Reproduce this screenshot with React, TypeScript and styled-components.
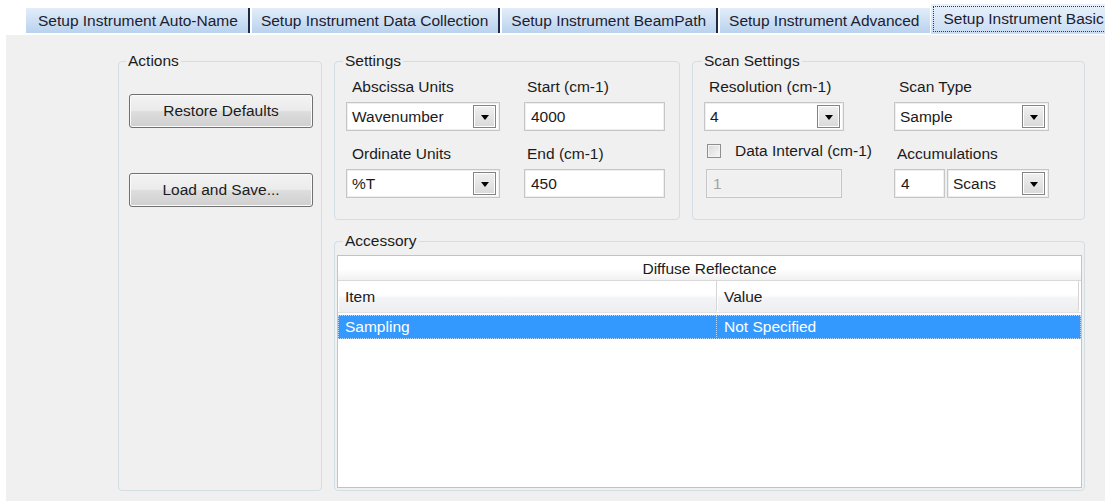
import styled, { createGlobalStyle } from 'styled-components'

const GlobalStyle = createGlobalStyle`
  html, body {
    margin: 0;
    padding: 0;
    background: #ffffff;
  }
  body {
    font-family: "Liberation Sans", Arial, sans-serif;
    font-size: 15.5px;
    color: #1b1b1b;
  }
`

const Page = styled.div`
  display: flex;
  flex-direction: column;
  min-height: 100vh;
  background: #ffffff;
`

const TabStrip = styled.div`
  display: flex;
  align-items: flex-end;
  height: 34px;
  padding-left: 26px;
  border-bottom: 1px solid #ffffff;
  overflow: hidden;
  white-space: nowrap;
`

const Tab = styled.div<{ $active?: boolean; $divider?: boolean; $first?: boolean }>`
  display: flex;
  align-items: center;
  flex-shrink: 0;
  box-sizing: border-box;
  height: ${(p) => (p.$active ? '30px' : '25px')};
  margin-bottom: ${(p) => (p.$active ? '0' : '1px')};
  margin-right: ${(p) => (p.$divider ? '2px' : '1px')};
  padding: ${(p) => (p.$active ? '0 2px' : `0 10px 0 ${p.$first ? 12 : 9}px`)};
  font-size: 15.5px;
  color: #1c2030;
  background: ${(p) =>
    p.$active
      ? 'linear-gradient(#e8f1fb, #c9ddf3)'
      : 'linear-gradient(#e2edf9, #b9d2ee)'};
  border-right: ${(p) => (p.$divider ? '2px solid #1d2a42' : 'none')};
`

const FocusLabel = styled.span`
  display: flex;
  align-items: center;
  height: 24px;
  padding: 0 9px 0 10px;
  border: 1px dotted #3a3a3a;
`

const Panel = styled.div`
  flex: 1;
  margin-left: 6px;
  background: #f0f0f0;
  padding: 17px 0 0 112px;
`

const Layout = styled.div`
  display: grid;
  grid-template-columns: 204px 751px;
  grid-template-rows: 168px 259px;
  column-gap: 12px;
  row-gap: 12px;
`

const Group = styled.fieldset<{ $span?: boolean }>`
  box-sizing: border-box;
  margin: 0;
  min-width: 0;
  border: 1px solid #d3dde4;
  border-radius: 4px;
  grid-row: ${(p) => (p.$span ? '1 / 3' : 'auto')};
`

// the legend sits after the group's left padding, so each group passes its own shift
const Legend = styled.legend<{ $shift: number }>`
  margin-left: ${(p) => p.$shift}px;
  padding: 0 2px;
  line-height: 18px;
`

const ActionsGroup = styled(Group)`
  display: flex;
  flex-direction: column;
  gap: 45px;
  padding: 24px 9px 0 10px;
`

const Button = styled.button`
  width: 184px;
  height: 34px;
  font-family: inherit;
  font-size: 15.5px;
  color: #1b1b1b;
  border: 1px solid #707070;
  border-radius: 3px;
  background: linear-gradient(#f3f3f3 0%, #ebebeb 48%, #dddddd 52%, #cfcfcf 100%);
  box-shadow: inset 0 0 0 1px #fbfbfb;
`

const TopRow = styled.div`
  display: flex;
  gap: 12px;
`

const FormGroup = styled(Group)<{ $width: number; $columns: string; $gap: number }>`
  width: ${(p) => p.$width}px;
  display: grid;
  grid-template-columns: ${(p) => p.$columns};
  column-gap: ${(p) => p.$gap}px;
  row-gap: 14px;
  align-content: start;
  padding: 8px 0 0 11px;
`

const Field = styled.div`
  display: flex;
  flex-direction: column;
  gap: 6px;
`

const Label = styled.div<{ $indent?: number }>`
  height: 18px;
  line-height: 18px;
  padding-left: ${(p) => p.$indent ?? 0}px;
  white-space: nowrap;
`

const Combo = styled.div<{ $width?: number }>`
  box-sizing: border-box;
  display: flex;
  align-items: center;
  width: ${(p) => (p.$width ? `${p.$width}px` : '100%')};
  height: 29px;
  padding: 2px 3px 2px 5px;
  background: #ffffff;
  border: 1px solid #c6c6c6;
  box-shadow: inset 0 0 0 1px #eeeeee;
`

const ComboValue = styled.span`
  flex: 1;
  white-space: nowrap;
`

const DropButton = styled.span`
  box-sizing: border-box;
  display: flex;
  align-items: center;
  justify-content: center;
  width: 23px;
  height: 23px;
  border: 1px solid #838383;
  background: linear-gradient(#f0f0f0, #d9d9d9);
  box-shadow: inset 0 0 0 1px #ffffff;

  &::after {
    content: '';
    border-left: 4px solid transparent;
    border-right: 4px solid transparent;
    border-top: 5px solid #000000;
    margin-top: 1px;
  }
`

const TextBox = styled.div<{ $width?: number; $disabled?: boolean }>`
  box-sizing: border-box;
  display: flex;
  align-items: center;
  width: ${(p) => (p.$width ? `${p.$width}px` : '100%')};
  height: 29px;
  padding-left: 6px;
  background: ${(p) => (p.$disabled ? '#f0f0f0' : '#ffffff')};
  color: ${(p) => (p.$disabled ? '#a3a3a3' : 'inherit')};
  border: 1px solid #c6c6c6;
  box-shadow: inset 0 0 0 1px ${(p) => (p.$disabled ? '#f4f4f4' : '#eeeeee')};
`

const CheckRow = styled.label`
  display: flex;
  align-items: center;
  gap: 14px;
  height: 18px;
  margin-top: -3px;
  margin-bottom: 3px;
  padding-left: 3px;
  white-space: nowrap;
`

const CheckBox = styled.span`
  box-sizing: border-box;
  flex-shrink: 0;
  width: 14px;
  height: 14px;
  border: 1px solid #8e8f8f;
  background: linear-gradient(135deg, #d9d9d9, #f7f7f7);
  box-shadow: inset 0 0 0 1px #f4f4f4;
`

const InsetBox = styled.div`
  padding-left: 2px;
`

const Pair = styled.div`
  display: flex;
  gap: 2px;
`

const AccessoryGroup = styled(Group)`
  grid-column: 2;
  display: flex;
  padding: 5px 2px 2px 2px;
`

const Table = styled.div`
  flex: 1;
  display: flex;
  flex-direction: column;
  background: #ffffff;
  border: 1px solid #b9c5d1;
`

const Caption = styled.div`
  height: 24px;
  line-height: 26px;
  text-align: center;
  background: linear-gradient(#ffffff 55%, #f1f1f1);
  border-bottom: 1px solid #d9d9d9;
`

const Columns = styled.div`
  display: grid;
  grid-template-columns: 379px 362px 1fr;
`

const HeadRow = styled(Columns)`
  height: 31px;
  margin-bottom: 2px;
  border-bottom: 1px solid #e2e2e2;
`

const HeadCell = styled.div`
  display: flex;
  align-items: center;
  padding-left: 7px;
  background: linear-gradient(#ffffff 0%, #ffffff 45%, #f3f4f6 55%, #eceef0 100%);
  border-right: 1px solid #d6d6d6;
  border-radius: 0 0 2px 2px;
  box-shadow: inset 1px 0 0 #ffffff;
`

const DataRow = styled(Columns)<{ $selected?: boolean }>`
  height: 24px;
  background: ${(p) => (p.$selected ? '#3399ff' : 'transparent')};
  color: ${(p) => (p.$selected ? '#ffffff' : 'inherit')};
  outline: 1px dotted ${(p) => (p.$selected ? '#b8dbff' : 'transparent')};
  outline-offset: -1px;
`

const DataCell = styled.div<{ $divider?: boolean }>`
  display: flex;
  align-items: center;
  padding-left: 7px;
  border-right: 1px dotted ${(p) => (p.$divider ? '#b8dbff' : 'transparent')};
`

const tabs = [
  'Setup Instrument Auto-Name',
  'Setup Instrument Data Collection',
  'Setup Instrument BeamPath',
  'Setup Instrument Advanced',
]

export default function App() {
  return (
    <Page>
      <GlobalStyle />
      <TabStrip>
        {tabs.map((t, i) => (
          <Tab key={t} $first={i === 0} $divider={i < tabs.length - 1}>
            {t}
          </Tab>
        ))}
        <Tab $active>
          <FocusLabel>Setup Instrument Basic</FocusLabel>
        </Tab>
      </TabStrip>

      <Panel>
        <Layout>
          <ActionsGroup $span>
            <Legend $shift={-3}>Actions</Legend>
            <Button>Restore Defaults</Button>
            <Button>Load and Save...</Button>
          </ActionsGroup>

          <TopRow>
            <FormGroup $width={346} $columns="154px 141px" $gap={24}>
              <Legend $shift={-3}>Settings</Legend>
              <Field>
                <Label $indent={6}>Abscissa Units</Label>
                <Combo>
                  <ComboValue>Wavenumber</ComboValue>
                  <DropButton />
                </Combo>
              </Field>
              <Field>
                <Label $indent={3}>Start (cm-1)</Label>
                <TextBox>4000</TextBox>
              </Field>
              <Field>
                <Label $indent={6}>Ordinate Units</Label>
                <Combo>
                  <ComboValue>%T</ComboValue>
                  <DropButton />
                </Combo>
              </Field>
              <Field>
                <Label $indent={3}>End (cm-1)</Label>
                <TextBox>450</TextBox>
              </Field>
            </FormGroup>

            <FormGroup $width={393} $columns="140px 155px" $gap={50}>
              <Legend $shift={-2}>Scan Settings</Legend>
              <Field>
                <Label $indent={5}>Resolution (cm-1)</Label>
                <Combo>
                  <ComboValue>4</ComboValue>
                  <DropButton />
                </Combo>
              </Field>
              <Field>
                <Label $indent={5}>Scan Type</Label>
                <Combo>
                  <ComboValue>Sample</ComboValue>
                  <DropButton />
                </Combo>
              </Field>
              <Field>
                <CheckRow>
                  <CheckBox />
                  Data Interval (cm-1)
                </CheckRow>
                <InsetBox>
                  <TextBox $width={136} $disabled>
                    1
                  </TextBox>
                </InsetBox>
              </Field>
              <Field>
                <Label $indent={3}>Accumulations</Label>
                <Pair>
                  <TextBox $width={51}>4</TextBox>
                  <Combo $width={102}>
                    <ComboValue>Scans</ComboValue>
                    <DropButton />
                  </Combo>
                </Pair>
              </Field>
            </FormGroup>
          </TopRow>

          <AccessoryGroup>
            <Legend $shift={6}>Accessory</Legend>
            <Table>
              <Caption>Diffuse Reflectance</Caption>
              <HeadRow>
                <HeadCell>Item</HeadCell>
                <HeadCell>Value</HeadCell>
                <span />
              </HeadRow>
              <DataRow $selected>
                <DataCell $divider>Sampling</DataCell>
                <DataCell>Not Specified</DataCell>
                <span />
              </DataRow>
            </Table>
          </AccessoryGroup>
        </Layout>
      </Panel>
    </Page>
  )
}
